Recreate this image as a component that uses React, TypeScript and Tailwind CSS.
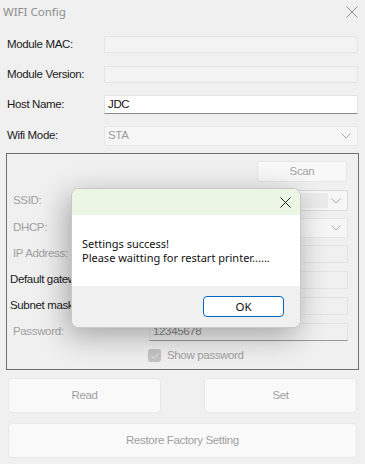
import React from "react";

const uiFont = { fontFamily: "'Liberation Sans', Arial, sans-serif", letterSpacing: "-0.35px" };
const dlgFont = { fontFamily: "'Noto Sans', 'Open Sans', sans-serif", letterSpacing: "0px" };

const Chevron = () => (
  <svg width="10" height="6" viewBox="0 0 10 6" className="absolute right-[6px] top-1/2 -translate-y-1/2">
    <path d="M0.5 0.5 L5 5 L9.5 0.5" fill="none" stroke="#a8a8a8" strokeWidth="1" />
  </svg>
);

const CloseX = ({ color, size }: { color: string; size: number }) => (
  <svg width={size} height={size} viewBox="0 0 12 12">
    <path d="M0.5 0.5 L11.5 11.5 M11.5 0.5 L0.5 11.5" stroke={color} strokeWidth="1" fill="none" />
  </svg>
);

const Row = ({ label, mt, h, children }: { label: string; mt: string; h: string; children: React.ReactNode }) => (
  <div className={`flex items-center ${mt} ${h}`}>
    <div className="w-[104px] pl-[7px] text-[11.5px] text-[#1a1a1a]">{label}</div>
    <div className="flex-1 h-full mr-[7px]">{children}</div>
  </div>
);

const DisabledBox = () => (
  <div className="h-full w-full bg-[#f3f3f3] border border-[#e3e3e3] rounded-[2px]" />
);

export default function App() {
  return (
    <div className="relative w-[365px] h-[464px] bg-[#f0f0f0] overflow-hidden" style={uiFont}>
      <div className="h-[24px] flex items-center justify-between pl-[3px] pr-[7px] bg-[#f0f0f0]">
        <span className="text-[11.5px] text-[#8c8c8c]" style={dlgFont}>WIFI Config</span>
        <CloseX color="#8a8a8a" size={12} />
      </div>

      <Row label="Module MAC:" mt="mt-[12px]" h="h-[17px]"><DisabledBox /></Row>
      <Row label="Module Version:" mt="mt-[13px]" h="h-[17px]"><DisabledBox /></Row>
      <Row label="Host Name:" mt="mt-[12px]" h="h-[19px]">
        <div className="h-full w-full bg-white border border-[#e3e3e3] border-b-[#8a8a8a] flex items-center pl-[3px] text-[11.5px] text-[#111]">JDC</div>
      </Row>
      <Row label="Wifi Mode:" mt="mt-[12px]" h="h-[20px]">
        <div className="relative h-full w-full bg-[#f6f6f6] border border-[#e6e6e6] rounded-[2px] flex items-center pl-[3px] text-[11.5px] text-[#9a9a9a]">
          STA
          <Chevron />
        </div>
      </Row>

      <div className="mt-[7px] mx-[6px] h-[217px] border border-[#6e6e6e] flex flex-col">
        <div className="mt-[7px] h-[21px] flex justify-end pr-[11px]">
          <div className="w-[90px] h-full bg-[#f8f8f8] border border-[#e6e6e6] rounded-[3px] flex items-center justify-center text-[11.5px] text-[#a3a3a3]">Scan</div>
        </div>
        {[
          { l: "SSID:", mt: "mt-[8px]", h: "h-[21px]", kind: "combo", dark: false },
          { l: "DHCP:", mt: "mt-[7px]", h: "h-[20px]", kind: "combo2", dark: false },
          { l: "IP Address:", mt: "mt-[7px]", h: "h-[18px]", kind: "box", dark: false },
          { l: "Default gateway:", mt: "mt-[8px]", h: "h-[18px]", kind: "box", dark: true },
          { l: "Subnet mask:", mt: "mt-[8px]", h: "h-[18px]", kind: "box", dark: true },
          { l: "Password:", mt: "mt-[8px]", h: "h-[18px]", kind: "pwd", dark: false },
        ].map((r) => (
          <div key={r.l} className={`flex items-center ${r.mt} ${r.h}`}>
            <div
              className={`w-[142px] text-[11.5px] whitespace-nowrap ${
                r.dark ? "pl-[3px] text-[#1a1a1a]" : "pl-[6px] text-[#a0a0a0]"
              }`}
            >
              {r.l}
            </div>
            <div className="flex-1 h-full mr-[10px]">
              {r.kind === "combo" && (
                <div className="relative h-full w-full bg-[#f6f6f6] border border-[#d9d9d9] rounded-[2px] p-[2px] pr-[19px]">
                  <div className="h-full w-full bg-[#ebebeb]" />
                  <Chevron />
                </div>
              )}
              {r.kind === "combo2" && (
                <div className="relative h-full w-full bg-[#f6f6f6] border border-[#e6e6e6] rounded-[2px]">
                  <Chevron />
                </div>
              )}
              {r.kind === "box" && <div className="h-full w-full bg-[#f0f0f0] border border-[#e3e3e3]" />}
              {r.kind === "pwd" && (
                <div className="h-full w-full bg-[#f0f0f0] border border-[#e3e3e3] border-b-[#9a9a9a] flex items-center pl-[3px] text-[11.5px] text-[#8a8a8a]">12345678</div>
              )}
            </div>
          </div>
        ))}
        <div className="mt-[8px] h-[13px] flex items-center pl-[141px]">
          <div className="w-[13px] h-[13px] rounded-[3px] bg-[#c4c4c4] flex items-center justify-center">
            <svg width="8" height="6" viewBox="0 0 8 6"><path d="M0.5 3 L3 5.5 L7.5 0.5" fill="none" stroke="#e8e8e8" strokeWidth="1" /></svg>
          </div>
          <span className="ml-[6px] text-[11.5px] text-[#a0a0a0]">Show password</span>
        </div>
      </div>

      <div className="mt-[8px] mx-[8px] flex justify-between">
        <div className="w-[153px] h-[35px] bg-[#f9f9f9] border border-[#e8e8e8] rounded-[4px] flex items-center justify-center text-[11.5px] text-[#a0a0a0]">Read</div>
        <div className="w-[153px] h-[35px] bg-[#f9f9f9] border border-[#e8e8e8] rounded-[4px] flex items-center justify-center text-[11.5px] text-[#a0a0a0]">Set</div>
      </div>
      <div className="mt-[10px] mx-[8px] h-[35px] bg-[#f9f9f9] border border-[#e8e8e8] rounded-[4px] flex items-center justify-center text-[11.5px] text-[#a0a0a0]">Restore Factory Setting</div>

      <div className="absolute left-[71px] top-[188px] w-[230px] h-[140px] rounded-[8px] overflow-hidden border border-[#c8c8c8] bg-white shadow-[-4px_8px_30px_rgba(0,0,0,0.32)] flex flex-col" style={dlgFont}>
        <div className="h-[26px] bg-[#ebf6e5] flex items-center justify-end pr-[9px]">
          <CloseX color="#111" size={11} />
        </div>
        <div className="h-[71px] bg-white flex flex-col justify-center pl-[10px] text-[11px] text-[#111]">
          <div className="leading-[14px]">Settings success!</div>
          <div className="leading-[14px]">Please waitting for restart printer......</div>
        </div>
        <div className="flex-1 bg-[#f0f0f0] flex items-start justify-end pt-[10px] pr-[16px]">
          <div className="w-[81px] h-[21px] bg-white border border-[#0067c0] rounded-[4px] flex items-center justify-center text-[11.5px] text-[#111]">OK</div>
        </div>
      </div>
    </div>
  );
}
